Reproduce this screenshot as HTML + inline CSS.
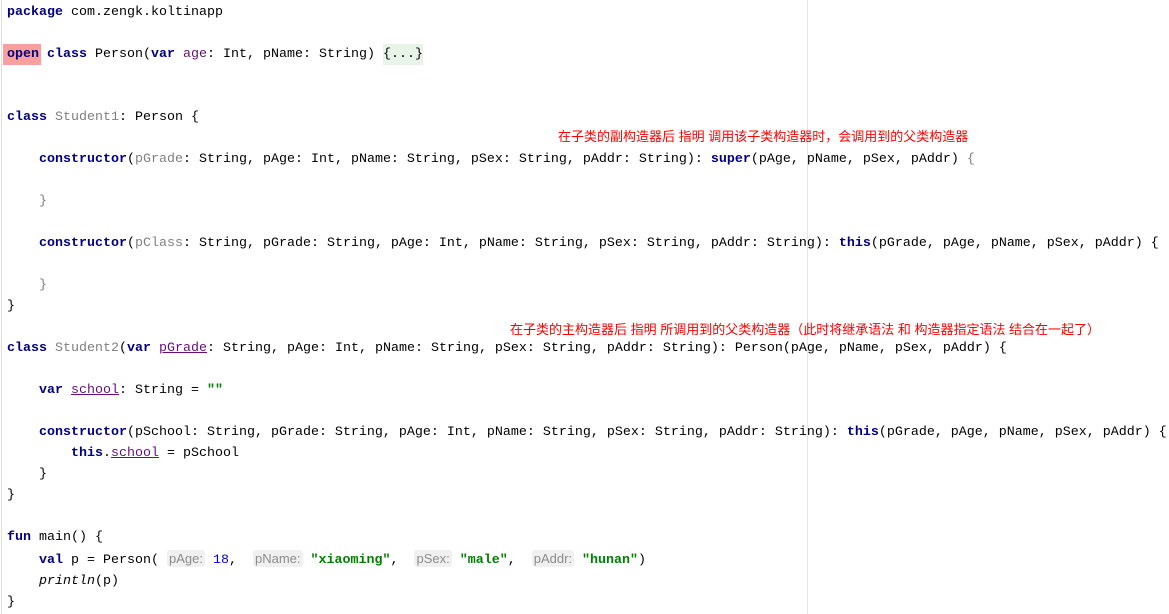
<!DOCTYPE html>
<html><head><meta charset="utf-8"><style>
body{margin:0;background:#fff;width:1169px;height:614px;overflow:hidden;position:relative}
.code{position:absolute;left:7px;top:2px;font-family:"Liberation Mono",monospace;font-size:13.33px;line-height:21px;white-space:pre;color:#000}
.k{color:#000080;font-weight:bold}
.p{color:#660e7a}
.g{color:#808080}
.s{color:#008000;font-weight:bold}
.n{color:#0000ff}
.u{text-decoration:underline}
.open{background:#f8a0a0;padding:3px 2px 3px 4px;margin:0 -2px 0 -4px}
.fold{background:#e8f4e8;padding:3px 0}
.h{font-family:"Liberation Sans",sans-serif;font-size:13px;color:#8c8c8c;background:#f0f0f0;border-radius:3px;padding:1px 2px}
.note{position:absolute;font-family:"Liberation Sans","Noto Sans CJK SC",sans-serif;font-size:13px;color:#f00;white-space:nowrap}
.margin{position:absolute;left:807px;top:0;width:1px;height:614px;background:#e6e6e6}
.lb{position:absolute;left:1px;top:0;width:1px;height:614px;background:#e0e0e0}
</style></head><body>
<div class="lb"></div>
<div class="margin"></div>
<div class="note" style="left:558px;top:126px">在子类的副构造器后 指明 调用该子类构造器时，会调用到的父类构造器</div>
<div class="note" style="left:510px;top:319px">在子类的主构造器后 指明 所调用到的父类构造器（此时将继承语法 和 构造器指定语法 结合在一起了）</div>
<div class="code"><span class="k">package</span> com.zengk.koltinapp

<span class="k open">open</span> <span class="k">class</span> Person(<span class="k">var</span> <span class="p">age</span>: Int, pName: String) <span class="fold">{...}</span>


<span class="k">class</span> <span class="g">Student1</span>: Person {

    <span class="k">constructor</span>(<span class="g">pGrade</span>: String, pAge: Int, pName: String, pSex: String, pAddr: String): <span class="k">super</span>(pAge, pName, pSex, pAddr) <span class="g">{</span>

    <span class="g">}</span>

    <span class="k">constructor</span>(<span class="g">pClass</span>: String, pGrade: String, pAge: Int, pName: String, pSex: String, pAddr: String): <span class="k">this</span>(pGrade, pAge, pName, pSex, pAddr) {

    <span class="g">}</span>
}

<span class="k">class</span> <span class="g">Student2</span>(<span class="k">var</span> <span class="p u">pGrade</span>: String, pAge: Int, pName: String, pSex: String, pAddr: String): Person(pAge, pName, pSex, pAddr) {

    <span class="k">var</span> <span class="p u">school</span>: String = <span class="s">""</span>

    <span class="k">constructor</span>(pSchool: String, pGrade: String, pAge: Int, pName: String, pSex: String, pAddr: String): <span class="k">this</span>(pGrade, pAge, pName, pSex, pAddr) {
        <span class="k">this</span>.<span class="p u">school</span> = pSchool
    }
}

<span class="k">fun</span> main() {
    <span class="k">val</span> p = Person( <span class="h">pAge:</span> <span class="n">18</span>,  <span class="h">pName:</span> <span class="s">"xiaoming"</span>,  <span class="h">pSex:</span> <span class="s">"male"</span>,  <span class="h">pAddr:</span> <span class="s">"hunan"</span>)
    <i>println</i>(p)
}</div>
</body></html>
